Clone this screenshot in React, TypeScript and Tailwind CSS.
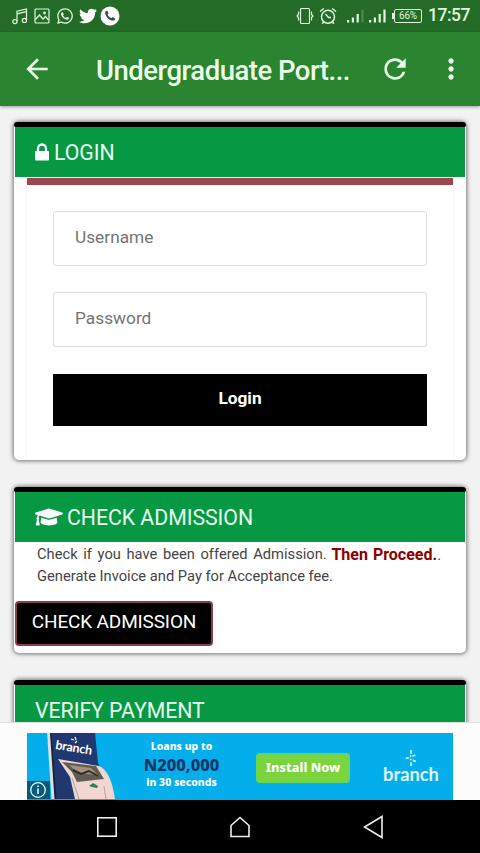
import type { ReactNode } from "react";
import { FaGraduationCap, FaTwitter, FaWhatsapp } from "react-icons/fa";
import { MdArrowBack, MdMoreVert, MdRefresh } from "react-icons/md";

function MusicIcon() {
  return (
    <svg viewBox="0 0 16 17" className="h-[17px] w-4" fill="none" stroke="currentColor" strokeWidth="1.2">
      <path d="M5 13.5V3.2L14.5 1v11" />
      <path d="M5 5.8l9.5-2.2" />
      <circle cx="2.9" cy="13.6" r="2.1" />
      <circle cx="12.4" cy="12.4" r="2.1" />
    </svg>
  );
}

function PictureIcon() {
  return (
    <svg viewBox="0 0 16 16" className="size-4" fill="none" stroke="currentColor" strokeWidth="1.2">
      <rect x="1" y="1" width="14" height="14" rx="1" />
      <path d="M1.5 11.5l4-4.5 3.5 4 2.5-2.5 3 3.5" />
      <circle cx="10.5" cy="5" r="0.8" />
    </svg>
  );
}

function CallIcon() {
  return (
    <svg viewBox="0 0 20 20" className="size-[20px]">
      <circle cx="10" cy="10" r="9.5" fill="#fff" />
      <path
        d="M5.3 5.4l1.9-.9 1.4 2.8-1 1.2c.7 1.7 2.1 3 3.8 3.7l1.3-1.1 2.6 1.6-.9 1.8c-4.8.9-9.9-4.3-9.1-9.1z"
        fill="#3a4a4c"
      />
    </svg>
  );
}

function VibrateIcon() {
  return (
    <svg viewBox="0 0 18 18" className="size-[18px]" fill="none" stroke="currentColor" strokeWidth="1.2">
      <rect x="4.5" y="1.5" width="9" height="15" rx="1" />
      <path d="M2.5 4.5v3l-1.5 1.5 1.5 1.5v3M15.5 4.5v3l1.5 1.5-1.5 1.5v3" />
    </svg>
  );
}

function AlarmIcon() {
  return (
    <svg viewBox="0 0 18 18" className="size-[18px]" fill="none" stroke="currentColor" strokeWidth="1.5">
      <circle cx="9" cy="9.8" r="6.5" />
      <path d="M1 4.5L4.8 1.5M17 4.5L13.2 1.5M6.5 7L9.5 10.5h2.5M4.5 15l-1.3 1.8M13.5 15l1.3 1.8" />
    </svg>
  );
}

function SignalIcon({ faded }: { faded?: boolean }) {
  return (
    <svg viewBox="0 0 17 14" className="h-[14px] w-[17px]" fill="currentColor">
      <rect x="0" y="11" width="2.2" height="2.5" />
      <rect x="4.8" y="8.5" width="2.2" height="5" />
      <rect x="9.6" y="5" width="2.2" height="8.5" />
      <rect x="14.4" y="0.5" width="2.2" height="13" opacity={faded ? 0.2 : 1} />
    </svg>
  );
}

function LockIcon() {
  return (
    <svg viewBox="0 0 14 18" className="mr-[5px] h-[18px] w-[14px] text-white">
      <rect x="0" y="8" width="14" height="9.5" rx="1" fill="currentColor" />
      <path d="M3 9V5.500a4 4 0 0 1 8 0V9" fill="none" stroke="currentColor" strokeWidth="2.3" />
    </svg>
  );
}

function StatusBar() {
  return (
    <div className="flex h-8 shrink-0 items-center bg-[#236b26] pl-3 text-[#dff8dc]">
      <MusicIcon />
      <div className="ml-[6px]">
        <PictureIcon />
      </div>
      <FaWhatsapp className="ml-[6px] size-[18px]" />
      <FaTwitter className="ml-[5px] size-[18px] text-white" />
      <div className="ml-[3px]">
        <CallIcon />
      </div>
      <div className="ml-[176px] flex items-center">
        <VibrateIcon />
        <div className="ml-[5px]">
          <AlarmIcon />
        </div>
        <div className="ml-[10px]">
          <SignalIcon faded />
        </div>
        <div className="ml-[5px]">
          <SignalIcon />
        </div>
        <div className="ml-[6px] flex items-center">
          <div className="h-[6px] w-[2px] bg-current" />
          <div className="flex h-[14px] w-[28px] items-center justify-center rounded-[2px] border border-current text-[10px] leading-none tracking-tight">
            66%
          </div>
        </div>
        <span className="ml-[6px] text-[17.5px] leading-none font-medium tracking-[-0.5px]">17:57</span>
      </div>
    </div>
  );
}

function AppBar() {
  return (
    <div className="z-10 flex h-[74px] shrink-0 items-center bg-[#2b8430] text-[#eaffe8] shadow-[0_1px_3px_rgba(0,0,0,0.35)]">
      <MdArrowBack className="ml-[21px] size-8" />
      <h1 className="ml-[43px] w-[280px] pt-[4px] text-[27.5px] leading-none font-medium tracking-[-0.5px] whitespace-nowrap">
        Undergraduate Port...
      </h1>
      <MdRefresh className="ml-[3px] size-8" />
      <MdMoreVert className="ml-6 size-8" />
    </div>
  );
}

function Panel({ title, icon, children }: { title: string; icon?: ReactNode; children?: ReactNode }) {
  return (
    <section className="rounded-[5px] bg-white shadow-[0_0_4px_1px_rgba(80,70,75,0.75)]">
      <div className="h-[5px] rounded-t-[4px] rounded-b-[2px] bg-black" />
      <header className="mx-px flex h-[50px] items-center bg-[#069843] pl-5 text-[21.3px] tracking-[-0.05px] text-[#e6fff0]">
        {icon}
        <h2 className="pt-[2px]">{title}</h2>
      </header>
      {children}
    </section>
  );
}

function Field({ label, type }: { label: string; type: string }) {
  return (
    <input
      type={type}
      placeholder={label}
      className="block h-[55px] w-full rounded-[3px] border border-[#dcdcdc] px-[21px] pb-[4px] text-[17.3px] outline-none placeholder:text-[#757575]"
    />
  );
}

function AdPhone() {
  return (
    <svg viewBox="0 0 100 66" className="h-[66px] w-[100px]">
      <path d="M20 0H68L71 30L86 66H26Z" fill="#21376f" />
      <path d="M20 0h3.500l5 66h-4z" fill="#d9dfe7" />
      <path d="M23 0h1.500l5 66h-2z" fill="#17223c" />
      <path d="M31 26L72 33Q84 38 88 66H48L43 44Z" fill="#ead8d4" />
      <path d="M35 29L69 33L77 46L50 49L45 39Z" fill="#625b50" />
      <path d="M42 32l22 3 7 7-20-2z" fill="#a1927e" />
      <path d="M46 37l8 4 8-3 9 5" fill="none" stroke="#342c2c" strokeWidth="2" />
      <path d="M50 51l29-4 7 19H51z" fill="#f3d6cf" />
      <path d="M62 53l4-3 5 3-1 2-5-1z" fill="#21835b" />
      <path d="M45 45l7 21M77 53l2 13" stroke="#b4a19e" fill="none" />
      <path d="M44 6l3 1M48 4l1 3M48 10l2-2" stroke="#fff" strokeWidth="1.2" />
      <text
        x="28"
        y="16"
        transform="rotate(9 28 16)"
        fill="#fff"
        fontSize="12.5"
        fontWeight="700"
        textLength="37"
        fontFamily="Lato, sans-serif"
      >
        branch
      </text>
      <rect y="48" width="23" height="18" fill="#075a78" />
      <circle cx="11" cy="57" r="7.3" fill="none" stroke="#e9ffff" strokeWidth="1.3" />
      <path d="M11 55.500v5.500M11 52.500v1.500" stroke="#e9ffff" strokeWidth="1.5" />
    </svg>
  );
}

function BranchMark() {
  return (
    <svg viewBox="0 0 14 18" className="h-[17px] w-[14px] text-[#d8faff]" fill="none" stroke="currentColor" strokeWidth="1.8">
      <path d="M7 0v4M7 13v4M1.5 8.5h3M6 9.5l1.5 1M8.5 6.5l3-1M9 11l3 1M6 6l1 1" />
    </svg>
  );
}

function AdBanner() {
  return (
    <div className="flex h-[78px] shrink-0 items-end border-t border-[#dedede] bg-[#fcfcfc] pl-[27px]">
      <div className="flex h-[67px] w-[426px] overflow-hidden bg-[#04aeea] text-white">
        <AdPhone />
        <div className="ml-[12px] w-[88px] pt-[6px] pr-[3px] text-center font-['Noto_Sans'] font-extrabold whitespace-nowrap">
          <p className="h-[14px] text-[10.5px] leading-[14px]">Loans up to</p>
          <p className="-mx-1 h-[22px] text-[16.5px] leading-[24px] text-[#103568]">N200,000</p>
          <p className="h-[14px] text-[10.5px] leading-[14px]">in 30 seconds</p>
        </div>
        <button className="mt-[20px] ml-[29px] h-[30px] w-[94px] rounded-[4px] border-2 border-[#67d957] bg-[#7bd43d] font-['Noto_Sans'] text-[12.8px] font-extrabold">
          Install Now
        </button>
        <div className="ml-[33px] flex w-[56px] flex-col items-center pt-[17px]">
          <BranchMark />
          <span className="-mt-[3px] font-[Lato] text-[18.3px] leading-[20px] font-bold text-[#dffaff]">branch</span>
        </div>
      </div>
    </div>
  );
}

function NavBar() {
  return (
    <nav className="h-[53px] shrink-0 bg-black text-[#eee]">
      <div className="flex h-full items-center">
        <svg viewBox="0 0 20 20" className="ml-[97px] size-5" fill="none" stroke="currentColor" strokeWidth="1.6">
          <rect x="0.8" y="0.8" width="18.4" height="18.4" />
        </svg>
        <svg viewBox="0 0 22 22" className="ml-[112px] size-[22px]" fill="none" stroke="currentColor" strokeWidth="1.6">
          <path d="M2 9.5L11 1.5L20 9.5V20.5H2Z" />
        </svg>
        <svg viewBox="0 0 21 24" className="ml-[112px] h-[24px] w-[21px]" fill="none" stroke="currentColor" strokeWidth="1.6">
          <path d="M19 1.5v21L1.5 12Z" />
        </svg>
      </div>
    </nav>
  );
}

export default function App() {
  return (
    <div className="flex h-[853px] w-[480px] flex-col overflow-hidden bg-[#f3f2f2] font-[Roboto,sans-serif]">
      <StatusBar />
      <AppBar />
      <main className="min-h-0 flex-1 overflow-hidden bg-[#f3f2f2] pt-4 pr-[14px] pl-[14px]">
        <div className="flex flex-col gap-[27px]">
          <Panel title="LOGIN" icon={<LockIcon />}>
            <form
              className="mx-3 mt-px h-[282px] border-x border-[#f7f7f7]"
              onSubmit={(e) => e.preventDefault()}
            >
              <div className="h-[7px] bg-[#9e464b]" />
              <div className="px-[26px] pt-[26px]">
                <Field label="Username" type="text" />
                <div className="mt-[26px]">
                  <Field label="Password" type="password" />
                </div>
                <button className="mt-[27px] block h-[52px] w-full bg-black pb-[2px] text-[17.3px] font-bold text-white">
                  Login
                </button>
              </div>
            </form>
          </Panel>
          <Panel title="CHECK ADMISSION" icon={<FaGraduationCap className="mr-[4px] size-[28px] text-white" />}>
            <div className="h-[111px] pt-[2px]">
              <p className="pr-[25px] pl-[23px] text-[14.7px] leading-[21px] text-[#444]">
                <span className="flex justify-between whitespace-nowrap">
                  <span className="[word-spacing:2px]">Check if you have been offered Admission.</span>
                  <span>
                    <b className="text-[16px] text-[#8b0000] [word-spacing:1px]">Then Proceed.</b>.
                  </span>
                </span>
                Generate Invoice and Pay for Acceptance fee.
              </p>
              <button className="mt-[14px] ml-px block h-[45px] w-[198px] rounded-[4px] border-2 border-[#8c3d48] bg-black pb-[3px] text-[19px] tracking-[-0.15px] text-white">
                CHECK ADMISSION
              </button>
            </div>
          </Panel>
          <Panel title="VERIFY PAYMENT" />
        </div>
      </main>
      <AdBanner />
      <NavBar />
    </div>
  );
}
